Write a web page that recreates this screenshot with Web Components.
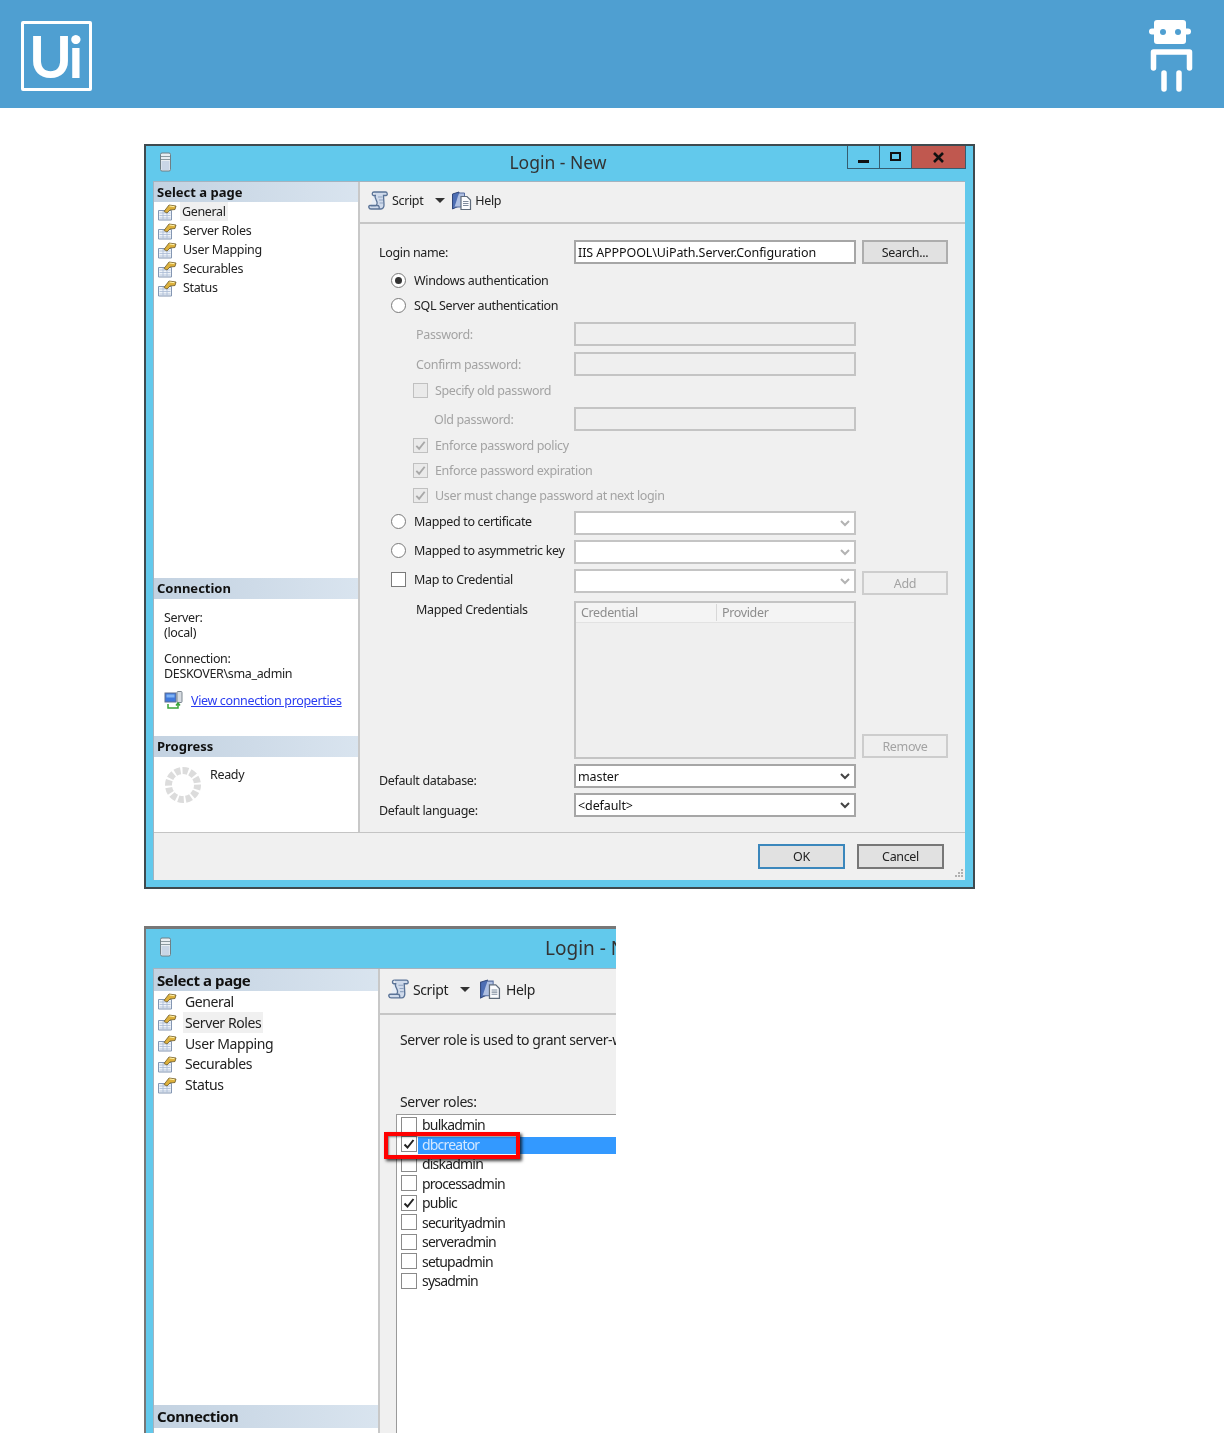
<!DOCTYPE html>
<html>
<head>
<meta charset="utf-8">
<title>Login - New</title>
<style>
    html, body { margin: 0; padding: 0; height: 1433px; overflow: hidden; background: #fff; }
    body { font-family: "Noto Sans", "Liberation Sans", sans-serif; color: #222; }
    .page { display: flex; flex-direction: column; gap: 37px; padding: 36px 0 0 144px; }
    #login-one { --fs: 12.5px; --ls: -0.35px; }
    #login-two { --fs: 14px; --ls: -0.4px; --title-top: 3px; --title-h: 39px; --title-size: 19px; --title-nudge: 2px;
        --title-cols: 385px 1fr; --side-w: 226px; --head-h: 23px; --head-fs: 15px; --head-ls: -0.4px; --item-h: 20.8px;
        --item-pad: 6px; --item-extra: 0px; --tool-h: 46px; --icon: 22px; --help-gap: 9px; --help-txt: 5px; }
</style>
</head>
<body>
<ui-header></ui-header>
<div class="page">

    <ssms-window id="login-one" style="width:831px;height:745px" heading="Login - New" controls>
        <div slot="sidebar" style="display:contents">
            <side-head style="--head-h:20px">Select a page</side-head>
            <page-item active>General</page-item>
            <page-item>Server Roles</page-item>
            <page-item>User Mapping</page-item>
            <page-item>Securables</page-item>
            <page-item>Status</page-item>
            <side-head style="margin-top:auto;padding-bottom:2px;box-sizing:border-box">Connection</side-head>
            <conn-info></conn-info>
            <side-head style="padding-bottom:2px;box-sizing:border-box">Progress</side-head>
            <progress-info>Ready</progress-info>
        </div>
        <tool-bar></tool-bar>
        <form-row gap="16">
            <span>Login name:</span>
            <win-input slot="field" value="IIS APPPOOL\UiPath.Server.Configuration"></win-input>
            <win-button slot="action">Search...</win-button>
        </form-row>
        <form-row gap="4" indent="12"><win-check type="radio" checked>Windows authentication</win-check></form-row>
        <form-row gap="1" indent="12"><win-check type="radio">SQL Server authentication</win-check></form-row>
        <form-row gap="5" indent="37" off><span>Password:</span><win-input slot="field" disabled></win-input></form-row>
        <form-row gap="6" indent="37" off><span>Confirm password:</span><win-input slot="field" disabled></win-input></form-row>
        <form-row gap="2" indent="34"><win-check disabled>Specify old password</win-check></form-row>
        <form-row gap="5" indent="55" off><span>Old password:</span><win-input slot="field" disabled></win-input></form-row>
        <form-row gap="2" indent="34"><win-check disabled checked>Enforce password policy</win-check></form-row>
        <form-row gap="1" indent="34"><win-check disabled checked>Enforce password expiration</win-check></form-row>
        <form-row gap="1" indent="34"><win-check disabled checked>User must change password at next login</win-check></form-row>
        <form-row gap="2" indent="12"><win-check type="radio">Mapped to certificate</win-check><win-input slot="field" combo faint style="margin-top:4px"></win-input></form-row>
        <form-row gap="5" indent="12"><win-check type="radio">Mapped to asymmetric key</win-check><win-input slot="field" combo faint style="margin-top:4px"></win-input></form-row>
        <form-row gap="5" indent="12"><win-check>Map to Credential</win-check><win-input slot="field" combo faint style="margin-top:4px"></win-input><win-button slot="action" disabled style="margin-top:4px">Add</win-button></form-row>
        <form-row gap="10" indent="37" tall>
            <span style="display:block">Mapped Credentials</span>
            <cred-list slot="field"></cred-list>
            <win-button slot="action" disabled style="align-self:end;margin-bottom:1px">Remove</win-button>
        </form-row>
        <form-row gap="5"><span style="padding-top:8px;display:block">Default database:</span><win-input slot="field" combo value="master"></win-input></form-row>
        <form-row gap="5"><span style="padding-top:10px;display:block">Default language:</span><win-input slot="field" combo value="&lt;default&gt;"></win-input></form-row>
        <dialog-footer slot="footer"></dialog-footer>
    </ssms-window>

    <ssms-window id="login-two" style="width:472px;height:507px" heading="Login - New" open-end>
        <div slot="sidebar" style="display:contents">
            <side-head style="--head-h:22px">Select a page</side-head>
            <page-item>General</page-item>
            <page-item active>Server Roles</page-item>
            <page-item>User Mapping</page-item>
            <page-item>Securables</page-item>
            <page-item>Status</page-item>
            <side-head style="margin-top:auto;margin-bottom:5px;padding-bottom:2px;box-sizing:border-box">Connection</side-head>
        </div>
        <tool-bar></tool-bar>
        <role-panel>
            <span slot="intro">Server role is used to grant server-wide security privileges to a user.</span>
            <span slot="caption">Server roles:</span>
            <role-row>bulkadmin</role-row>
            <role-row checked selected>dbcreator</role-row>
            <role-row>diskadmin</role-row>
            <role-row>processadmin</role-row>
            <role-row checked>public</role-row>
            <role-row>securityadmin</role-row>
            <role-row>serveradmin</role-row>
            <role-row>setupadmin</role-row>
            <role-row>sysadmin</role-row>
        </role-panel>
    </ssms-window>
</div>

<script>
// icons for the dialog chrome
const ICONS = {
    page: `<svg width="20" height="20" viewBox="0 0 20 20">
        <path d="M1.500 8.500h13v9.500h-13z" fill="#eef3f9" stroke="#8496b2"/>
        <path d="M2.500 11h11M2.500 13.500h11M2.500 16h11M6 9v8.500M10 9v8.500" stroke="#a9bad4" stroke-width=".8"/>
        <path d="M7 9.500L12 3l7 1-1 3.500-5 .5-3 3z" fill="#dcb03c" stroke="#6d5a28" stroke-width=".8"/>
        <path d="M12.500 4l5 .7" stroke="#fff2ad"/>
    </svg>`,
    server: `<svg width="14" height="20" viewBox="0 0 14 20">
        <rect x="1.500" y="1" width="10" height="18" rx="1.500" fill="#e8eef2" stroke="#6f7f86"/>
        <path d="M2 4.500h9M2 7.500h9" stroke="#8c9aa0"/>
        <rect x="2.500" y="9" width="8" height="9" fill="#c9d6e6"/>
    </svg>`,
    script: `<svg width="100%" height="100%" viewBox="0 0 21 20">
        <path d="M6 1.500h11.500c2 0 2.500 3.500.5 3.500h-2.500l.5 9c.2 2.500-1 4.500-3 4.500H3c-2.500 0-3-3.500-1-3.500h7.500c1.500 0 2 1.500 1.500 3.500" fill="#cfdaeb" stroke="#5a7397" stroke-width="1.300"/>
        <path d="M6 1.500c-2 0-2.500 3-.5 3.500h2.500c-1.500 0-1 2 0 4l1 2.500c.5 2-.5 3.500-1.500 3.500H3" fill="#e6edf6" stroke="#5a7397" stroke-width="1.300"/>
        <path d="M10 6.500h4.500M11 9.500h4M11.500 12.500h3.500" stroke="#8fa3c0"/>
    </svg>`,
    help: `<svg width="100%" height="100%" viewBox="0 0 21 20">
        <path d="M1.500 3.500L8 1.500v14l-6.500 3z" fill="#4d6eb4" stroke="#31477a"/>
        <path d="M8 2.500h5.500v14H3.500" fill="#aebfe2" stroke="#566da0"/>
        <path d="M10 6h6l3.500 3.500V19H10z" fill="#fbfcfe" stroke="#5f6b7a" stroke-width="1.200"/>
        <path d="M12 11h5.500M12 13h5.500M12 15h5.500" stroke="#7f8b9c"/>
    </svg>`,
    connection: `<svg width="20" height="20" viewBox="0 0 20 20">
        <rect x="1" y="3" width="11" height="9" fill="#3f78dc" stroke="#5f6f92"/>
        <rect x="2.500" y="4.500" width="8" height="3" fill="#7fb2f4"/>
        <rect x="13" y="1.500" width="5" height="11" rx="1" fill="#d7dce2" stroke="#7d8790"/>
        <path d="M4 14v4h10v-4M12 15.500l2-2.500 2 2.500" fill="none" stroke="#3aa53a" stroke-width="1.500"/>
    </svg>`,
    tick: `<svg width="100%" height="100%" viewBox="0 0 14 14" style="display:block">
        <path d="M2.500 7.500l3 3 6-7.500" fill="none" stroke="currentColor" stroke-width="2"/>
    </svg>`,
    chevron: `<svg width="10" height="8" viewBox="0 0 10 8">
        <path d="M1 2l4 4 4-4" fill="none" stroke="currentColor" stroke-width="2"/>
    </svg>`,
    close: `<svg width="13" height="11" viewBox="0 0 13 11">
        <path d="M2 1l9 9M11 1l-9 9" fill="none" stroke="#111" stroke-width="2.600"/>
    </svg>`
};

class UiHeader extends HTMLElement {
    connectedCallback() {
        this.attachShadow({ mode: 'open' }).innerHTML = `
            <style>
                :host { display: flex; align-items: center; justify-content: space-between;
                    height: 108px; padding: 0 31px 0 21px; background: #4f9fd1; box-sizing: border-box; }
                .logo { display: flex; align-items: center; box-sizing: border-box; padding-left: 5px;
                    width: 71px; height: 70px; border: 3px solid #fff; border-radius: 2px; margin-top: 4px;
                    color: #fff; font: 700 58px/1 Lato, "Noto Sans", sans-serif; letter-spacing: -3px; }
                svg { display: block; margin-top: 3px; }
            </style>
            <div class="logo">Ui</div>
            <svg width="44" height="72" viewBox="0 0 44 72" fill="#fff">
                <rect x="5" y="0" width="32" height="24" rx="3"/>
                <rect x="0" y="8.500" width="42" height="6" rx="3"/>
                <circle cx="14" cy="12" r="3" fill="#4f9fd1"/>
                <circle cx="29" cy="12" r="3" fill="#4f9fd1"/>
                <path d="M4.500 48V32h36v16" fill="none" stroke="#fff" stroke-width="5.500" stroke-linecap="round" stroke-linejoin="round"/>
                <path d="M15 53v16M30 53v16" stroke="#fff" stroke-width="5.500" stroke-linecap="round"/>
            </svg>`;
    }
}

class SsmsWindow extends HTMLElement {
    connectedCallback() {
        const controls = this.hasAttribute('controls') ? `
            <div class="controls">
                <span class="ctl"><i class="min"></i></span>
                <span class="ctl"><i class="max"></i></span>
                <span class="ctl close">${ICONS.close}</span>
            </div>` : '';
        this.attachShadow({ mode: 'open' }).innerHTML = `
            <style>
                :host { display: flex; flex-direction: column; box-sizing: border-box; overflow: hidden;
                    background: #62c9ec; border: 2px solid #3f4a4f; font-size: var(--fs); letter-spacing: var(--ls);
                    padding: 0 8px 7px 7px; filter: blur(.3px); }
                :host([open-end]) { border-width: var(--title-top) 0 0 2px; border-color: #777; padding-right: 0; padding-bottom: 0; }
                .title { display: grid; grid-template-columns: var(--title-cols, 1fr auto 1fr); align-items: center;
                    height: var(--title-h, 35px); flex: none; margin-right: -1px; padding-left: 6px; color: #333; }
                .title > svg { display: block; margin-top: -3px; }
                .heading { font-size: var(--title-size, 17.500px); letter-spacing: 0; white-space: nowrap;
                    margin: 0 10px var(--title-nudge, 4px) 1px; }
                .controls { display: flex; justify-self: end; align-self: start; height: 23px; }
                .ctl { width: 32px; display: flex; align-items: center; justify-content: center; box-sizing: border-box;
                    border: 1px solid #355d70; border-width: 0 1px 1px 0; color: #111; }
                .ctl:first-child { border-left-width: 1px; width: 33px; }
                .ctl.close { width: 54px; background: #c0584f; }
                .min { width: 11px; height: 3px; background: #111; margin-top: 8px; }
                .max { width: 7px; height: 5px; border: 2px solid #111; margin-bottom: 2px; }
                .client { flex: 1; min-height: 0; display: flex; flex-direction: column; border: 1px solid #a5b3bf; border-width: 1px 0 0 1px; background: #f0f0f0; }
                .panes { flex: 1; min-height: 0; display: flex; }
                .side { flex: none; box-sizing: border-box; width: var(--side-w, 206px); background: #fff; border-right: 2px solid #c8c8c8;
                    display: flex; flex-direction: column; }
                .main { flex: 1; min-width: 0; display: flex; flex-direction: column; }
            </style>
            <div class="title">
                ${ICONS.server}
                <span class="heading">${this.getAttribute('heading')}</span>
                ${controls}
            </div>
            <div class="client">
                <div class="panes">
                    <div class="side"><slot name="sidebar"></slot></div>
                    <div class="main"><slot></slot></div>
                </div>
                <slot name="footer"></slot>
            </div>`;
    }
}

class SideHead extends HTMLElement {
    connectedCallback() {
        this.attachShadow({ mode: 'open' }).innerHTML = `
            <style>
                :host { display: flex; align-items: center; flex: none; height: var(--head-h, 21px); padding-left: 3px;
                    background: linear-gradient(90deg, #c3d2e1, #d9e4ef); font-weight: 700; font-size: var(--head-fs, 13px);
                    letter-spacing: var(--head-ls, 0); color: #111; }
            </style><slot></slot>`;
    }
}

class PageItem extends HTMLElement {
    connectedCallback() {
        this.attachShadow({ mode: 'open' }).innerHTML = `
            <style>
                :host { display: flex; align-items: center; flex: none; height: var(--item-h, 19px); padding-left: 3px; gap: var(--item-pad, 3px); }
                svg { flex: none; }
                span { padding: 1px 2px 1px calc(2px + var(--item-extra, 1px)); }
                :host([active]) span { background: #f0f0f0; padding-left: 2px; }
            </style>
            ${ICONS.page}<span><slot></slot></span>`;
    }
}

class ConnInfo extends HTMLElement {
    connectedCallback() {
        this.attachShadow({ mode: 'open' }).innerHTML = `
            <style>
                :host { display: block; flex: none; box-sizing: border-box; height: 137px; padding: 11px 0 0 10px; line-height: 15px; }
                p { margin: 0 0 11px; }
                p + p { margin-bottom: 9px; }
                .link { display: flex; align-items: center; gap: 7px; }
                a { color: #2a3cf0; text-decoration: underline; }
            </style>
            <p>Server:<br>(local)</p>
            <p>Connection:<br>DESKOVER\\sma_admin</p>
            <div class="link">${ICONS.connection}<a>View connection properties</a></div>`;
    }
}

class ProgressInfo extends HTMLElement {
    connectedCallback() {
        this.attachShadow({ mode: 'open' }).innerHTML = `
            <style>
                :host { display: flex; flex: none; box-sizing: border-box; height: 75px; gap: 8px; padding: 9px 0 0 10px; }
                span { line-height: 17px; }
            </style>
            <svg width="38" height="38" viewBox="0 0 38 38">
                <circle cx="19" cy="19" r="14.500" fill="none" stroke="#dcdcdc" stroke-width="7" stroke-dasharray="5.600 2" stroke-dashoffset="1"/>
            </svg>
            <span><slot></slot></span>`;
    }
}

class ToolBar extends HTMLElement {
    connectedCallback() {
        this.attachShadow({ mode: 'open' }).innerHTML = `
            <style>
                :host { display: flex; align-items: center; flex: none; box-sizing: border-box; height: var(--tool-h, 42px);
                    padding: 0 0 4px 8px; border-bottom: 2px solid #c6c6c6; }
                .i { width: var(--icon, 21px); height: var(--icon, 21px); flex: none; }
                .txt { margin-left: 3px; }
                .txt.h { margin-left: var(--help-txt, 3px); }
                .arrow { width: 0; height: 0; border: 5px solid transparent; border-top: 5px solid #333; border-bottom: 0; margin: 0 var(--help-gap, 6px) 0 12px; }
            </style>
            <span class="i">${ICONS.script}</span><span class="txt">Script</span>
            <span class="arrow"></span>
            <span class="i">${ICONS.help}</span><span class="txt h">Help</span>`;
    }
}

class FormRow extends HTMLElement {
    connectedCallback() {
        const gap = this.getAttribute('gap') || 0;
        const indent = Number(this.getAttribute('indent') || 0);
        this.attachShadow({ mode: 'open' }).innerHTML = `
            <style>
                :host { display: grid; grid-template-columns: ${195 - indent}px 282px 92px; grid-template-rows: 100%; align-items: center; flex: none;
                    height: 24px; margin-top: ${gap}px; padding-left: ${19 + indent}px; white-space: nowrap; }
                :host([tall]) { height: 158px; align-items: start; }
                :host([off]) { color: #a3a3a3; }
                .a { display: flex; height: 100%; justify-content: flex-end; }
            </style>
            <div class="l"><slot></slot></div>
            <div><slot name="field"></slot></div>
            <div class="a"><slot name="action"></slot></div>`;
    }
}

class WinInput extends HTMLElement {
    connectedCallback() {
        const combo = this.hasAttribute('combo');
        this.attachShadow({ mode: 'open' }).innerHTML = `
            <style>
                :host { display: flex; align-items: center; justify-content: space-between; box-sizing: border-box;
                    width: 282px; height: 24px; padding: 0 4px 0 2px; background: #fff; border: 2px solid #a6a6a6;
                    color: #111; white-space: nowrap; letter-spacing: -0.1px; }
                :host([disabled]) { background: #efefef; border-color: #c4c4c4; }
                :host([faint]) { border-color: #c4c4c4; }
                i { display: flex; color: #444; }
                :host([faint]) i { color: #b3b3b3; }
            </style>
            <span>${this.getAttribute('value') ? this.getAttribute('value').replace(/</g, '&lt;') : ''}</span>
            ${combo ? `<i>${ICONS.chevron}</i>` : ''}`;
    }
}

class WinButton extends HTMLElement {
    connectedCallback() {
        this.attachShadow({ mode: 'open' }).innerHTML = `
            <style>
                :host { display: flex; align-items: center; justify-content: center; box-sizing: border-box; width: 86px; height: 24px;
                    background: #e1e1e1; border: 2px solid #adadad; color: #222; }
                :host([disabled]) { background: #efefef; border-color: #cdcdcd; color: #a3a3a3; }
                :host([primary]), :host([dark]) { width: 87px; height: 25px; }
                :host([primary]) { border-color: #3b87bc; }
                :host([dark]) { border-color: #777; }
            </style><slot></slot>`;
    }
}

class WinCheck extends HTMLElement {
    connectedCallback() {
        const radio = this.getAttribute('type') === 'radio';
        this.attachShadow({ mode: 'open' }).innerHTML = `
            <style>
                :host { display: flex; align-items: center; gap: 8px; white-space: nowrap; color: #222; }
                :host([disabled]) { color: #a3a3a3; gap: 7px; }
                .box { flex: none; box-sizing: border-box; width: 15px; height: 15px; background: #fff;
                    border: 1.500px solid #7a7a7a; color: #333; display: flex; align-items: center; justify-content: center; }
                :host([disabled]) .box { background: #eaeaea; border-color: #c0c0c0; color: #a8a8a8; }
                .radio { border-radius: 50%; }
                .dot { width: 7px; height: 7px; border-radius: 50%; background: #333; }
            </style>
            <span class="box ${radio ? 'radio' : ''}">${this.hasAttribute('checked') ? (radio ? '<i class="dot"></i>' : ICONS.tick) : ''}</span>
            <span><slot></slot></span>`;
    }
}

class CredList extends HTMLElement {
    connectedCallback() {
        this.attachShadow({ mode: 'open' }).innerHTML = `
            <style>
                :host { display: block; box-sizing: border-box; width: 282px; height: 158px; border: 2px solid #c4c4c4; background: #efefef; color: #8d8d8d; }
                .head { display: grid; grid-template-columns: 140px 1fr; height: 19px; align-items: center; background: #f4f4f4; border-bottom: 1px solid #e2e2e2; }
                .head span { padding-left: 5px; }
                .head span + span { border-left: 1px solid #d8d8d8; }
            </style>
            <div class="head"><span>Credential</span><span>Provider</span></div>`;
    }
}

class DialogFooter extends HTMLElement {
    connectedCallback() {
        this.attachShadow({ mode: 'open' }).innerHTML = `
            <style>
                :host { display: flex; flex: none; justify-content: flex-end; align-items: center; gap: 12px; position: relative; box-sizing: border-box;
                    height: 48px; padding: 0 21px 0 0; background: #f0f0f0; border-top: 1px solid #c4c4c4; }
                svg { position: absolute; right: 1px; bottom: 1px; }
            </style>
            <win-button primary>OK</win-button>
            <win-button dark>Cancel</win-button>
            <svg width="11" height="11" viewBox="0 0 11 11" fill="#b0b0b0"><path d="M8 1h2v2H8zM5 4h2v2H5zM8 4h2v2H8zM2 7h2v2H2zM5 7h2v2H5zM8 7h2v2H8z"/></svg>`;
    }
}

class RolePanel extends HTMLElement {
    connectedCallback() {
        this.attachShadow({ mode: 'open' }).innerHTML = `
            <style>
                :host { display: flex; flex-direction: column; flex: 1; min-height: 0; padding: 15px 0 0 20px; white-space: nowrap; }
                .intro { height: 50px; overflow: hidden; line-height: 20px; }
                .cap { height: 20px; line-height: 22px; margin-top: 11px; }
                .list { position: relative; flex: 1; margin: 3px 0 0 -4px; padding: 0 0 0 4px; background: #fff;
                    border: 1px solid #9a9a9a; border-width: 1px 0 0 1px; }
                .mark { position: absolute; left: -13px; top: 17px; box-sizing: border-box; width: 136px; height: 27px;
                    border: 4px solid #f00; box-shadow: 2px 2px 3px rgba(0, 0, 0, .75), inset 1px 1px 2px rgba(0, 0, 0, .5); }
            </style>
            <div class="intro"><slot name="intro"></slot></div>
            <div class="cap"><slot name="caption"></slot></div>
            <div class="list"><slot></slot><div class="mark"></div></div>`;
    }
}

class RoleRow extends HTMLElement {
    connectedCallback() {
        this.attachShadow({ mode: 'open' }).innerHTML = `
            <style>
                :host { display: flex; align-items: center; box-sizing: border-box; height: 19.500px; letter-spacing: -0.8px; }
                .box { flex: none; box-sizing: border-box; width: 16px; height: 16px; background: #fff; border: 1.500px solid #8a8a8a; color: #222; }
                .txt { flex: 1; height: 100%; display: flex; align-items: center; padding-left: 4px; margin-left: 1px; color: #222; }
                :host([selected]) .txt { background: linear-gradient(transparent 2px, #3399ff 2px); color: #d4e8ff; }
            </style>
            <span class="box">${this.hasAttribute('checked') ? ICONS.tick : ''}</span>
            <span class="txt"><slot></slot></span>`;
    }
}

customElements.define('ui-header', UiHeader);
customElements.define('ssms-window', SsmsWindow);
customElements.define('side-head', SideHead);
customElements.define('page-item', PageItem);
customElements.define('conn-info', ConnInfo);
customElements.define('progress-info', ProgressInfo);
customElements.define('tool-bar', ToolBar);
customElements.define('form-row', FormRow);
customElements.define('win-input', WinInput);
customElements.define('win-button', WinButton);
customElements.define('win-check', WinCheck);
customElements.define('cred-list', CredList);
customElements.define('dialog-footer', DialogFooter);
customElements.define('role-panel', RolePanel);
customElements.define('role-row', RoleRow);
</script>
</body>
</html>
